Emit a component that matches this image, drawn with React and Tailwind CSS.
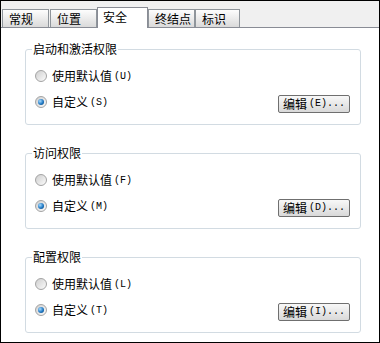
// 属性页 "安全" 选项卡：三个权限分组，每组两个单选项 + 编辑按钮。

const TABS = [
  { label: '常规', w: 'w-[47px]' },
  { label: '位置', w: 'w-[47px]', ml: 'ml-[1px]' },
  { label: '安全', w: 'w-[51px]', active: true },
  { label: '终结点', w: 'w-[47px]' },
  { label: '标识', w: 'w-[45px]' },
];

const GROUPS = [
  { title: '启动和激活权限', def: ['使用默认值', '(U)'], custom: ['自定义', '(S)'], edit: ['编辑', '(E)...'] },
  { title: '访问权限', def: ['使用默认值', '(F)'], custom: ['自定义', '(M)'], edit: ['编辑', '(D)...'] },
  { title: '配置权限', def: ['使用默认值', '(L)'], custom: ['自定义', '(T)'], edit: ['编辑', '(I)...'] },
];

// 中文 + 等宽半角的快捷键部分（模仿宋体的半角字形）
function Txt({ parts }) {
  return (
    <span className="flex items-center">
      {parts[0]}
      <span className="ml-[2px] font-['Liberation_Mono',monospace] text-[10px]">{parts[1]}</span>
    </span>
  );
}

function Radio({ checked, parts }) {
  return (
    <label className="flex items-center gap-[5px] h-[18px]">
      <span className="flex items-center justify-center w-[12px] h-[12px] rounded-full border border-[#a3a3a3] bg-gradient-to-br from-[#cfcfcf] to-[#fbfbfb]">
        {checked && (
          <span className="w-[6px] h-[6px] rounded-full bg-[radial-gradient(circle_at_35%_35%,#a8dcff,#1f78c4_55%,#0a3e6c)]" />
        )}
      </span>
      <Txt parts={parts} />
    </label>
  );
}

function Group({ g, first }) {
  return (
    <fieldset className={`${first ? '' : 'mt-[21px]'} border border-[#d2dbe2] rounded-[3px] pl-[9px] pr-[10px] pt-[11px] pb-[11px]`}>
      <legend className="-ml-[3px] px-[1px] leading-[14px]">{g.title}</legend>
      <Radio parts={g.def} />
      <div className="flex items-start justify-between mt-[8px]">
        <Radio checked parts={g.custom} />
        <button
          type="button"
          className="mt-[2px] w-[72px] h-[18px] flex items-center justify-center border border-[#6f6f6f] rounded-[2px] bg-gradient-to-b from-[#f8f8f8] to-[#d9d9d9] text-[12px] leading-none"
        >
          <Txt parts={g.edit} />
        </button>
      </div>
    </fieldset>
  );
}

export default function App() {
  return (
    <div className="w-[380px] h-[343px] border border-black bg-white flex flex-col text-[12px] text-black font-['Noto_Sans_CJK_SC',sans-serif]">
      <div className="h-[27px] flex items-end pl-[1px] bg-[#f0f0f0] border-b border-[#898c95] shrink-0">
        {TABS.map((t) =>
          t.active ? (
            <div
              key={t.label}
              className={`${t.w} h-[21px] -mb-px relative z-10 bg-white border border-b-0 border-[#898c95] pl-[5px] pt-[1px] leading-[16px]`}
            >
              {t.label}
            </div>
          ) : (
            <div
              key={t.label}
              className={`${t.w} ${t.ml || ''} h-[18px] flex items-center border border-b-0 border-[#8f959b] bg-gradient-to-b from-[#fdfdfd] to-[#dadada] pl-[6px] leading-none`}
            >
              {t.label}
            </div>
          )
        )}
      </div>
      <div className="flex-1 flex flex-col pt-[14px] pl-[24px] pr-[18px]">
        {GROUPS.map((g, i) => (
          <Group key={g.title} g={g} first={i === 0} />
        ))}
      </div>
    </div>
  );
}
